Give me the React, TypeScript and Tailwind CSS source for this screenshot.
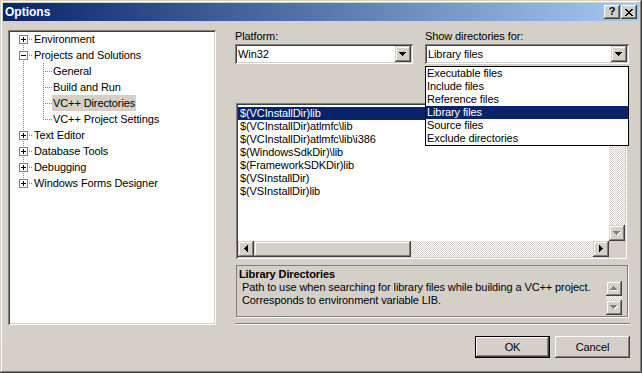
import React from "react";

type Dir = "up" | "down" | "left" | "right";

function Arrow({ dir, disabled }: { dir: Dir; disabled?: boolean }) {
  const rects: [number, number, number, number][] = [];
  for (let i = 0; i < 4; i++) {
    const len = 7 - 2 * i;
    if (dir === "down") rects.push([i, i, len, 1]);
    if (dir === "up") rects.push([i, 3 - i, len, 1]);
    if (dir === "right") rects.push([i, i, 1, len]);
    if (dir === "left") rects.push([3 - i, i, 1, len]);
  }
  const vert = dir === "up" || dir === "down";
  const w = (vert ? 7 : 4) + 1;
  const h = (vert ? 4 : 7) + 1;
  return (
    <svg width={w} height={h} viewBox={`0 0 ${w} ${h}`} shapeRendering="crispEdges">
      {disabled &&
        rects.map((r, k) => (
          <rect key={"s" + k} x={r[0] + 1} y={r[1] + 1} width={r[2]} height={r[3]} fill="#ffffff" />
        ))}
      {rects.map((r, k) => (
        <rect key={k} x={r[0]} y={r[1]} width={r[2]} height={r[3]} fill={disabled ? "#808080" : "#000000"} />
      ))}
    </svg>
  );
}

function ScrollBtn({ dir, disabled, className }: { dir: Dir; disabled?: boolean; className?: string }) {
  return (
    <div
      className={
        "bg-[#d4d0c8] shadow-[inset_-1px_-1px_#404040,inset_1px_1px_#d4d0c8,inset_-2px_-2px_#808080,inset_2px_2px_#ffffff] flex items-center justify-center shrink-0 " +
        (className ?? "")
      }
    >
      <Arrow dir={dir} disabled={disabled} />
    </div>
  );
}

function Combo({ value, width }: { value: string; width: string }) {
  return (
    <div
      className={
        "h-[20px] bg-white flex items-center p-[2px] shadow-[inset_1px_1px_#808080,inset_-1px_-1px_#ffffff,inset_2px_2px_#404040,inset_-2px_-2px_#d4d0c8] " +
        width
      }
    >
      <span className="flex-1 pl-[1px] leading-[16px] h-[16px] overflow-hidden whitespace-nowrap">{value}</span>
      <ScrollBtn dir="down" className="w-[16px] h-[16px]" />
    </div>
  );
}

type Row = {
  label: string;
  level: 0 | 1;
  box?: "plus" | "minus";
  first?: boolean;
  last?: boolean;
  selected?: boolean;
};

const rows: Row[] = [
  { label: "Environment", level: 0, box: "plus", first: true },
  { label: "Projects and Solutions", level: 0, box: "minus" },
  { label: "General", level: 1 },
  { label: "Build and Run", level: 1 },
  { label: "VC++ Directories", level: 1, selected: true },
  { label: "VC++ Project Settings", level: 1, last: true },
  { label: "Text Editor", level: 0, box: "plus" },
  { label: "Database Tools", level: 0, box: "plus" },
  { label: "Debugging", level: 0, box: "plus" },
  { label: "Windows Forms Designer", level: 0, box: "plus", last: true },
];

const DOT = "#808080";

function Gutter({ row }: { row: Row }) {
  if (row.level === 0) {
    return (
      <svg width={23} height={16} viewBox="0 0 23 16" shapeRendering="crispEdges" className="shrink-0">
        {!row.first && <line x1={13.5} y1={0} x2={13.5} y2={4} stroke={DOT} strokeDasharray="1 1" />}
        {!row.last && <line x1={13.5} y1={13} x2={13.5} y2={16} stroke={DOT} strokeDasharray="1 1" strokeDashoffset={1} />}
        <line x1={19} y1={8.5} x2={23} y2={8.5} stroke={DOT} strokeDasharray="1 1" />
        <rect x={9.5} y={4.5} width={8} height={8} fill="#ffffff" stroke={DOT} />
        <line x1={11} y1={8.5} x2={16} y2={8.5} stroke="#000" />
        {row.box === "plus" && <line x1={13.5} y1={6} x2={13.5} y2={11} stroke="#000" />}
      </svg>
    );
  }
  return (
    <svg width={42} height={16} viewBox="0 0 42 16" shapeRendering="crispEdges" className="shrink-0">
      <line x1={13.5} y1={0} x2={13.5} y2={16} stroke={DOT} strokeDasharray="1 1" />
      <line x1={33.5} y1={0} x2={33.5} y2={row.last ? 9 : 16} stroke={DOT} strokeDasharray="1 1" />
      <line x1={35} y1={8.5} x2={42} y2={8.5} stroke={DOT} strokeDasharray="1 1" />
    </svg>
  );
}

const dirs = [
  "$(VCInstallDir)lib",
  "$(VCInstallDir)atlmfc\\lib",
  "$(VCInstallDir)atlmfc\\lib\\i386",
  "$(WindowsSdkDir)\\lib",
  "$(FrameworkSDKDir)lib",
  "$(VSInstallDir)",
  "$(VSInstallDir)lib",
];

const showOptions = [
  "Executable files",
  "Include files",
  "Reference files",
  "Library files",
  "Source files",
  "Exclude directories",
];

export default function App() {
  return (
    <div className="w-[642px] h-[373px] bg-[#d4d0c8] overflow-hidden font-['Liberation_Sans',Arial,sans-serif] text-[11px] tracking-[-0.1px] text-black p-[3px] shadow-[inset_-1px_-1px_#404040,inset_1px_1px_#d4d0c8,inset_-2px_-2px_#808080,inset_2px_2px_#ffffff] flex flex-col">
      {/* Title bar */}
      <div className="h-[18px] shrink-0 bg-[linear-gradient(to_right,#0a246a,#a6caf0)] flex items-center pl-[2px] pr-[2px]">
        <span className="flex-1 text-white font-bold text-[12px] tracking-normal leading-[18px]">Options</span>
        <div className="flex items-center gap-[1px]">
          <div className="w-[16px] h-[14px] bg-[#d4d0c8] shadow-[inset_-1px_-1px_#404040,inset_1px_1px_#ffffff,inset_-2px_-2px_#808080] flex items-center justify-center font-bold text-[11px] leading-none pb-[1px]">
            ?
          </div>
          <div className="w-[16px] h-[14px] bg-[#d4d0c8] shadow-[inset_-1px_-1px_#404040,inset_1px_1px_#ffffff,inset_-2px_-2px_#808080] flex items-center justify-center">
            <svg width={8} height={7} viewBox="0 0 8 7" shapeRendering="crispEdges">
              {[0, 1, 2, 3, 4, 5, 6].map((i) => (
                <g key={i}>
                  <rect x={i} y={i} width={2} height={1} fill="#000" />
                  <rect x={6 - i} y={i} width={2} height={1} fill="#000" />
                </g>
              ))}
            </svg>
          </div>
        </div>
      </div>

      {/* Body */}
      <div className="flex pl-[5px] pt-[9px]">
        {/* Tree */}
        <div className="w-[208px] h-[295px] shrink-0 bg-white px-[2px] pt-[1px] shadow-[inset_1px_1px_#808080,inset_-1px_-1px_#ffffff,inset_2px_2px_#404040,inset_-2px_-2px_#d4d0c8]">
          {rows.map((r) => (
            <div key={r.label} className="flex h-[16px] items-center">
              <Gutter row={r} />
              <span
                className={
                  "h-[16px] leading-[16px] px-[1px] whitespace-nowrap " + (r.selected ? "bg-[#d4d0c8]" : "")
                }
              >
                {r.label}
              </span>
            </div>
          ))}
        </div>

        {/* Right column */}
        <div className="ml-[19px] w-[395px] flex flex-col">
          <div className="flex gap-[12px]">
            <div className="flex flex-col">
              <div className="h-[13px] leading-[13px] mb-[1px]">Platform:</div>
              <Combo value="Win32" width="w-[178px]" />
            </div>
            <div className="flex flex-col">
              <div className="h-[13px] leading-[13px] mb-[1px]">Show directories for:</div>
              <div className="relative">
                <Combo value="Library files" width="w-[204px]" />
                <div className="absolute top-[22px] left-0 w-[204px] h-[80px] bg-white border border-black z-10">
                  {showOptions.map((o) => (
                    <div
                      key={o}
                      className={
                        "h-[13px] leading-[13px] pl-[1px] whitespace-nowrap " +
                        (o === "Library files" ? "bg-[#0a246a] text-white" : "")
                      }
                    >
                      {o}
                    </div>
                  ))}
                </div>
              </div>
            </div>
          </div>

          {/* Directory list */}
          <div className="mt-[39px] ml-[1px] w-[391px] h-[156px] bg-white p-[2px] shadow-[inset_1px_1px_#808080,inset_-1px_-1px_#ffffff,inset_2px_2px_#404040,inset_-2px_-2px_#d4d0c8] flex flex-col">
            <div className="flex h-[136px]">
              <div className="flex-1 pt-[2px]">
                {dirs.map((d, i) => (
                  <div
                    key={d}
                    className={"h-[13px] leading-[13px] pl-[2px] whitespace-nowrap " + (i === 0 ? "bg-[#0a246a] text-white" : "")}
                  >
                    {d}
                  </div>
                ))}
              </div>
              <div className="w-[16px] flex flex-col">
                <ScrollBtn dir="up" disabled className="w-[16px] h-[16px]" />
                <div className="flex-1 bg-[repeating-conic-gradient(#ffffff_0_25%,#d4d0c8_0_50%)] bg-[length:2px_2px]" />
                <ScrollBtn dir="down" disabled className="w-[16px] h-[16px]" />
              </div>
            </div>
            <div className="flex h-[16px]">
              <ScrollBtn dir="left" className="w-[16px] h-[16px]" />
              <div className="w-[157px] h-[16px] bg-[#d4d0c8] shadow-[inset_-1px_-1px_#404040,inset_1px_1px_#d4d0c8,inset_-2px_-2px_#808080,inset_2px_2px_#ffffff]" />
              <div className="flex-1 bg-[repeating-conic-gradient(#ffffff_0_25%,#d4d0c8_0_50%)] bg-[length:2px_2px]" />
              <ScrollBtn dir="right" className="w-[16px] h-[16px]" />
              <div className="w-[16px] h-[16px] bg-[#d4d0c8]" />
            </div>
          </div>

          {/* Description */}
          <div className="mt-[6px] ml-[1px] w-[392px] h-[52px] border border-[#808080] shadow-[1px_1px_#ffffff] flex flex-col">
            <div className="pl-[2px] pt-[2px] h-[15px] leading-[13px] font-bold">Library Directories</div>
            <div className="flex">
              <div className="flex-1 pl-[5px]">
                <div className="h-[13px] leading-[13px] whitespace-nowrap">
                  Path to use when searching for library files while building a VC++ project.
                </div>
                <div className="h-[13px] leading-[13px] whitespace-nowrap">Corresponds to environment variable LIB.</div>
              </div>
              <div className="w-[16px] h-[34px] mr-[5px] flex flex-col">
                <ScrollBtn dir="up" disabled className="w-[16px] h-[15px]" />
                <div className="flex-1 bg-[repeating-conic-gradient(#ffffff_0_25%,#d4d0c8_0_50%)] bg-[length:2px_2px]" />
                <ScrollBtn dir="down" disabled className="w-[16px] h-[15px]" />
              </div>
            </div>
          </div>

          {/* Separator */}
          <div className="mt-[6px] w-[395px] h-[2px] border-t border-t-[#808080] border-b border-b-white" />

          {/* Buttons */}
          <div className="mt-[11px] flex justify-end gap-[5px]">
            <div className="w-[75px] h-[22px] border border-black">
              <div className="w-full h-full bg-[#d4d0c8] shadow-[inset_-1px_-1px_#404040,inset_1px_1px_#ffffff,inset_-2px_-2px_#808080] flex items-center justify-center">
                OK
              </div>
            </div>
            <div className="w-[75px] h-[22px] bg-[#d4d0c8] shadow-[inset_-1px_-1px_#404040,inset_1px_1px_#ffffff,inset_-2px_-2px_#808080] flex items-center justify-center">
              Cancel
            </div>
          </div>
        </div>
      </div>
    </div>
  );
}
